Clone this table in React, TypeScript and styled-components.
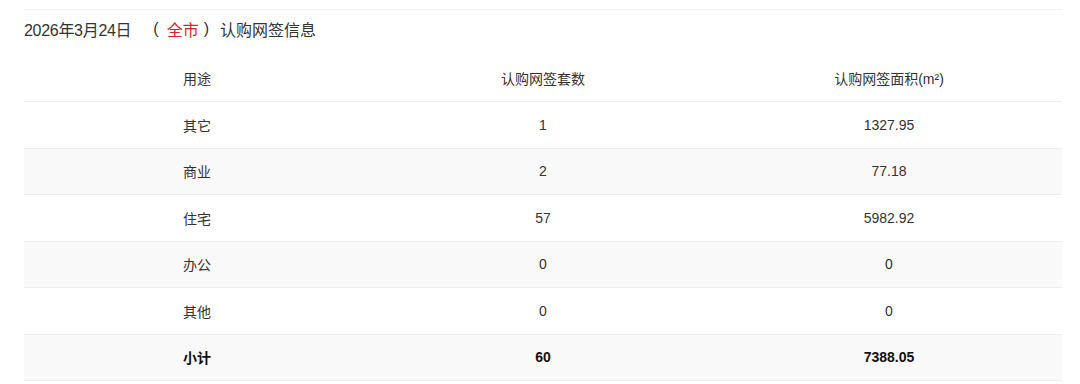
import React from "react";
import styled, { createGlobalStyle } from "styled-components";

const GlobalStyle = createGlobalStyle`
  html, body { margin: 0; padding: 0; background: #ffffff; }
  body {
    font-family: "Liberation Sans", "Noto Sans CJK SC", Arial, sans-serif;
    color: #333333;
  }
`;

const Page = styled.div`
  padding: 9px 18px 0 24px;
`;

const Section = styled.section`
  border-top: 1px solid #f1f1f1;
`;

const Title = styled.h2`
  display: flex;
  align-items: center;
  margin: 0 0 7px 0;
  height: 38px;
  font-size: 16px;
  font-weight: normal;
  color: #333333;
  white-space: nowrap;
`;

const DateText = styled.span`
  letter-spacing: -0.3px;
`;

const Paren = styled.span<{ $gap: number }>`
  margin-left: ${(p) => p.$gap}px;
`;

const City = styled.span`
  color: #d9262c;
  margin: 0 5px 0 8px;
`;

const Label = styled.span`
  margin-left: 11px;
`;

const Table = styled.table`
  width: 100%;
  border-collapse: collapse;
  table-layout: fixed;
  font-size: 14px;
`;

const Row = styled.tr<{ $striped?: boolean; $total?: boolean }>`
  height: 46.5px;
  background: ${(p) => (p.$striped ? "#f9f9f9" : "#ffffff")};
  font-weight: ${(p) => (p.$total ? "bold" : "normal")};
  color: ${(p) => (p.$total ? "#111111" : "#333333")};
`;

const HeadCell = styled.th`
  font-weight: normal;
  text-align: center;
  padding: 0;
  color: #333333;
  border-bottom: 1px solid #eeeeee;
`;

const Cell = styled.td`
  text-align: center;
  padding: 0;
  border-bottom: 1px solid #eeeeee;
`;

const rows = [
  { use: "其它", count: "1", area: "1327.95" },
  { use: "商业", count: "2", area: "77.18" },
  { use: "住宅", count: "57", area: "5982.92" },
  { use: "办公", count: "0", area: "0" },
  { use: "其他", count: "0", area: "0" },
];

export default function App() {
  return (
    <>
      <GlobalStyle />
      <Page>
        <Section>
          <Title>
            <DateText>2026年3月24日</DateText>
            <Paren $gap={22}>(</Paren>
            <City>全市</City>
            <span>)</span>
            <Label>认购网签信息</Label>
          </Title>
          <Table>
            <thead>
              <Row>
                <HeadCell>用途</HeadCell>
                <HeadCell>认购网签套数</HeadCell>
                <HeadCell>认购网签面积(m²)</HeadCell>
              </Row>
            </thead>
            <tbody>
              {rows.map((r, i) => (
                <Row key={r.use} $striped={i % 2 === 1}>
                  <Cell>{r.use}</Cell>
                  <Cell>{r.count}</Cell>
                  <Cell>{r.area}</Cell>
                </Row>
              ))}
              <Row $striped $total>
                <Cell>小计</Cell>
                <Cell>60</Cell>
                <Cell>7388.05</Cell>
              </Row>
            </tbody>
          </Table>
        </Section>
      </Page>
    </>
  );
}
